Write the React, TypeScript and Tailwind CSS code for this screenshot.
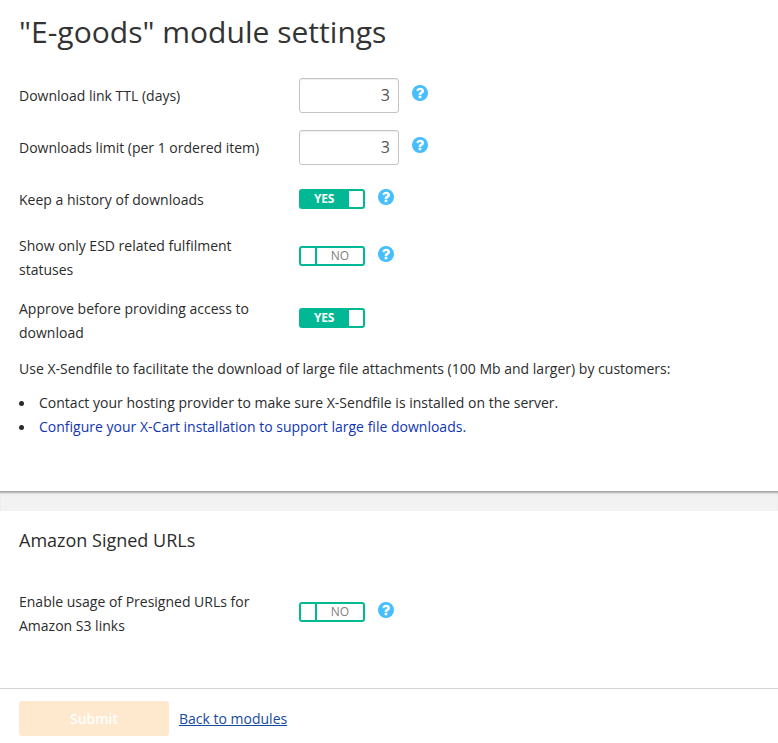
import React from "react";

function Help() {
  return (
    <svg className="block size-4 shrink-0" viewBox="128 128 1536 1536" fill="#47bfff" aria-label="Help">
      <circle cx="896" cy="896" r="700" fill="#fff" />
      <path d="M1024 1376v-192q0-14-9-23t-23-9h-192q-14 0-23 9t-9 23v192q0 14 9 23t23 9h192q14 0 23-9t9-23zM1280 704q0-88-55.5-163t-138.5-116-170-41q-243 0-371 213-15 24 8 42l132 100q7 6 19 6 16 0 25-12 53-68 86-92 34-24 86-24 48 0 85.500 26t37.500 59q0 38-20 61t-68 45q-63 28-115.500 86.500t-52.500 125.500v36q0 14 9 23t23 9h192q14 0 23-9t9-23q0-19 21.500-49.500t54.500-49.500q32-18 49-28.500t46-35 44.500-48 28-60.500 12.500-81zM1664 896q0 209-103 385.500t-279.500 279.500-385.500 103-385.500-103-279.500-279.500-103-385.500 103-385.500 279.500-279.500 385.500-103 385.500 103 279.500 279.500 103 385.500z" />
    </svg>
  );
}

function Toggle({ on }: { on?: boolean }) {
  return on ? (
    <div className="flex h-5 w-[66px] rounded-[3px] bg-[#00b894] p-0.5 text-[12px] leading-4 font-bold tracking-[-0.3px] text-white">
      <span className="w-12 pr-0.5 text-center">YES</span>
      <span className="w-3.5 rounded-r-[1px] bg-white" />
    </div>
  ) : (
    <div className="flex h-5 w-[66px] rounded-[3px] border-2 border-[#00b894] text-[12px] leading-4 text-[#808080]">
      <span className="w-4 border-r-2 border-[#00b894]" />
      <span className="w-[46px] text-center">NO</span>
    </div>
  );
}

function NumberField() {
  return (
    <input className="block h-[35px] w-[100px] rounded-[3px] border border-[#c4c4c4] pr-2 pb-0.5 text-right text-[16px] text-[#555] shadow-[inset_0_1px_1px_rgba(0,0,0,0.075)] outline-none" defaultValue="3" />
  );
}

export default function App() {
  return (
    <main className="h-[743px] w-[778px] overflow-hidden bg-white font-['Open_Sans',sans-serif] text-[14px] leading-6 text-[#2c2c2c]">
      <section className="h-[491px] px-[19px] pt-3">
        <h1 className="h-[66px] text-[30px] leading-10 tracking-[0.02px] whitespace-nowrap text-[#333]">"E-goods" module settings</h1>
        <div className="flex h-[52px]">
          <label className="w-[280px] pt-1.5">Download link TTL (days)</label>
          <NumberField />
          <div className="ml-[13px] pt-[7px]"><Help /></div>
        </div>
        <div className="flex h-[52px]">
          <label className="w-[280px] pt-1.5">Downloads limit (per 1 ordered item)</label>
          <NumberField />
          <div className="ml-[13px] pt-[7px]"><Help /></div>
        </div>
        <div className="flex h-[52px]">
          <label className="w-[280px] pt-1.5">Keep a history of downloads</label>
          <div className="pt-[7px]"><Toggle on /></div>
          <div className="ml-[13px] pt-[7px]"><Help /></div>
        </div>
        <div className="flex h-[63px]">
          <label className="w-[280px] pr-10">Show only ESD related fulfilment statuses</label>
          <div className="pt-3"><Toggle /></div>
          <div className="ml-[13px] pt-3"><Help /></div>
        </div>
        <div className="flex h-[60px]">
          <label className="w-[280px] pr-10">Approve before providing access to download</label>
          <div className="pt-[11px]"><Toggle on /></div>
        </div>
        <p className="tracking-[0.006px] whitespace-nowrap">Use X-Sendfile to facilitate the download of large file attachments (100 Mb and larger) by customers:</p>
        <ul className="mt-2.5 tracking-[0.006px] whitespace-nowrap">
          <li className="flex items-center">
            <span className="mr-[15px] size-[5px] rounded-full bg-[#2c2c2c]" />
            Contact your hosting provider to make sure X-Sendfile is installed on the server.
          </li>
          <li className="flex items-center">
            <span className="mr-[15px] size-[5px] rounded-full bg-[#2c2c2c]" />
            <a className="text-[#0f35b5]">Configure your X-Cart installation to support large file downloads.</a>
          </li>
        </ul>
      </section>
      <div className="h-5 border-t border-[#a5a9a9] bg-[#f2f2f2] shadow-[inset_0_2px_2px_-1px_rgba(0,0,0,0.3)]" />
      <section className="h-[177px] px-[19px] pt-[17px]">
        <h2 className="h-[62px] text-[18px]">Amazon Signed URLs</h2>
        <div className="flex">
          <label className="w-[280px] pr-10">Enable usage of Presigned URLs for Amazon S3 links</label>
          <div className="pt-3"><Toggle /></div>
          <div className="ml-[13px] pt-3"><Help /></div>
        </div>
      </section>
      <footer className="flex h-[55px] items-start border-t border-[#d4d4d4] pt-3 pl-[19px]">
        <button className="mr-2.5 h-[35px] w-[150px] rounded-[3px] bg-[#fee8ce] font-semibold text-white">Submit</button>
        <a className="pt-1.5 text-[#164a9c] underline">Back to modules</a>
      </footer>
    </main>
  );
}
